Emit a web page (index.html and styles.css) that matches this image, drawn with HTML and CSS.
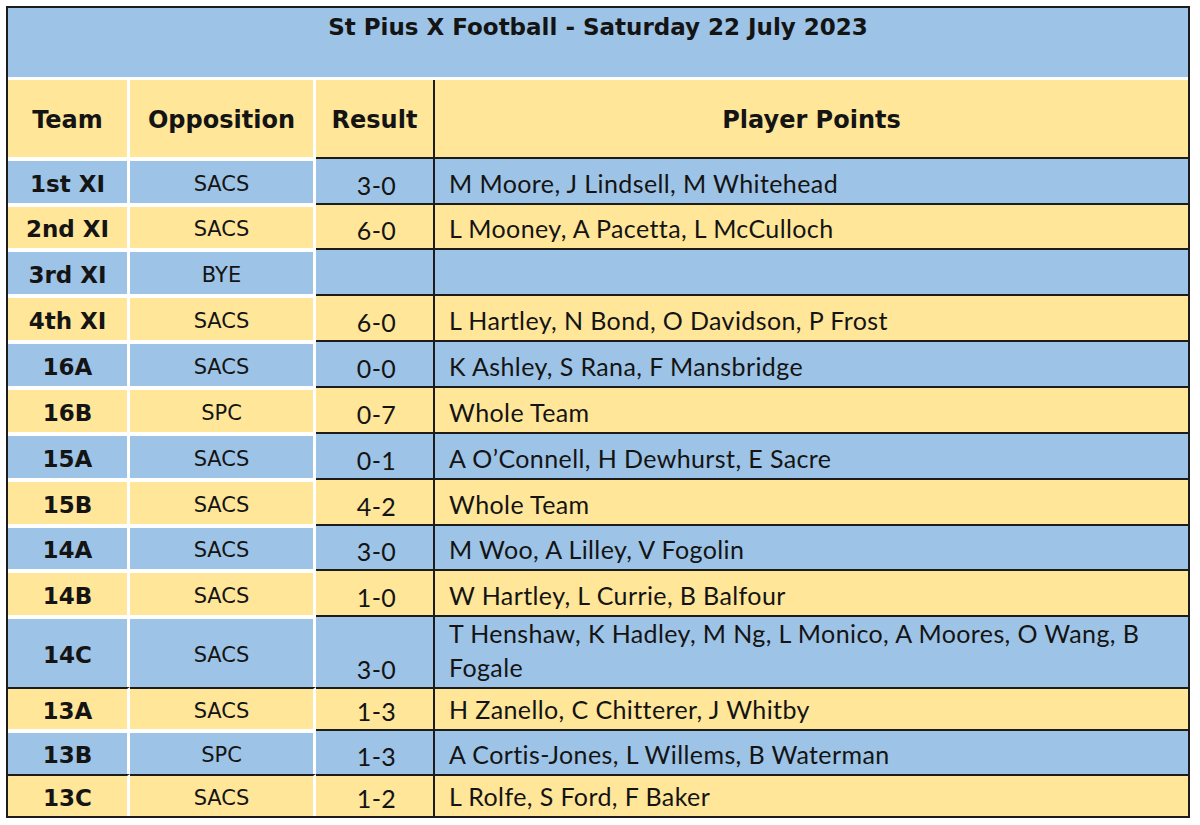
FILE: index.html
```html
<!DOCTYPE html>
<html lang="en">
<head>
<meta charset="utf-8">
<title>St Pius X Football - Saturday 22 July 2023</title>
<link rel="stylesheet" href="styles.css">
</head>
<body>
<div class="sheet">
  <div class="title">St Pius X Football - Saturday 22 July 2023</div>
  <div class="grid">
    <div class="row head yellow">
      <div class="c team">Team</div>
      <div class="c opp">Opposition</div>
      <div class="c res">Result</div>
      <div class="c pts">Player Points</div>
    </div>
    <div class="row blue">
      <div class="c team">1st XI</div><div class="c opp">SACS</div><div class="c res">3-0</div><div class="c pts">M Moore, J Lindsell, M Whitehead</div>
    </div>
    <div class="row yellow">
      <div class="c team">2nd XI</div><div class="c opp">SACS</div><div class="c res">6-0</div><div class="c pts">L Mooney, A Pacetta, L McCulloch</div>
    </div>
    <div class="row blue">
      <div class="c team">3rd XI</div><div class="c opp">BYE</div><div class="c res"></div><div class="c pts"></div>
    </div>
    <div class="row yellow">
      <div class="c team">4th XI</div><div class="c opp">SACS</div><div class="c res">6-0</div><div class="c pts">L Hartley, N Bond, O Davidson, P Frost</div>
    </div>
    <div class="row blue">
      <div class="c team">16A</div><div class="c opp">SACS</div><div class="c res">0-0</div><div class="c pts">K Ashley, S Rana, F Mansbridge</div>
    </div>
    <div class="row yellow">
      <div class="c team">16B</div><div class="c opp">SPC</div><div class="c res">0-7</div><div class="c pts">Whole Team</div>
    </div>
    <div class="row blue">
      <div class="c team">15A</div><div class="c opp">SACS</div><div class="c res">0-1</div><div class="c pts">A O’Connell, H Dewhurst, E Sacre</div>
    </div>
    <div class="row yellow">
      <div class="c team">15B</div><div class="c opp">SACS</div><div class="c res">4-2</div><div class="c pts">Whole Team</div>
    </div>
    <div class="row blue">
      <div class="c team">14A</div><div class="c opp">SACS</div><div class="c res">3-0</div><div class="c pts">M Woo, A Lilley, V Fogolin</div>
    </div>
    <div class="row yellow">
      <div class="c team">14B</div><div class="c opp">SACS</div><div class="c res">1-0</div><div class="c pts">W Hartley, L Currie, B Balfour</div>
    </div>
    <div class="row blue">
      <div class="c team">14C</div><div class="c opp">SACS</div><div class="c res">3-0</div><div class="c pts">T Henshaw, K Hadley, M Ng, L Monico, A Moores, O Wang, B Fogale</div>
    </div>
    <div class="row yellow dark-top">
      <div class="c team">13A</div><div class="c opp">SACS</div><div class="c res">1-3</div><div class="c pts">H Zanello, C Chitterer, J Whitby</div>
    </div>
    <div class="row blue">
      <div class="c team">13B</div><div class="c opp">SPC</div><div class="c res">1-3</div><div class="c pts">A Cortis-Jones, L Willems, B Waterman</div>
    </div>
    <div class="row yellow dark-top">
      <div class="c team">13C</div><div class="c opp">SACS</div><div class="c res">1-2</div><div class="c pts">L Rolfe, S Ford, F Baker</div>
    </div>
  </div>
</div>
</body>
</html>
```

FILE: styles.css
```css
* { box-sizing: border-box; }

html, body {
  margin: 0;
  padding: 0;
  background: #ffffff;
}

body {
  padding: 6px 0 0 6px;
  color: #141414;
}

.sheet {
  width: 1184px;
  height: 812px;
  border: 2px solid #1c1c1c;
  background: #ffffff;
  display: flex;
  flex-direction: column;
}

.title {
  height: 72px;
  background: #9dc3e6;
  border-bottom: 3px solid #ffffff;
  padding-top: 6px;
  text-align: center;
  font-family: "DejaVu Sans", sans-serif;
  font-weight: bold;
  font-size: 23px;
  line-height: 27px;
}

.grid {
  display: grid;
  grid-template-columns: 122px 186px 119px 1fr;
  grid-template-rows: 77px 46px 45px 46px 46px 46px 46px 46px 46px 45px 46px 72px 42px 45px 42px;
}

.row { display: contents; }

.row.blue > .c { background: #9dc3e6; }
.row.yellow > .c { background: #ffe699; }

.c {
  display: flex;
  min-width: 0;
}

.team, .opp {
  justify-content: center;
  align-items: center;
  border-right: 3px solid #ffffff;
  border-top: 4px solid #ffffff;
  font-family: "DejaVu Sans", sans-serif;
}

.team {
  font-weight: bold;
  font-size: 23px;
  padding-top: 3px;
}

.opp {
  font-size: 21px;
  padding-top: 3px;
}

.res, .pts {
  border-top: 2px solid #1c1c1c;
  font-family: Lato, sans-serif;
  font-size: 25px;
  letter-spacing: 0.4px;
  line-height: 34px;
  align-items: flex-end;
}

.res {
  justify-content: center;
  border-right: 2px solid #1c1c1c;
  padding: 0 0 1px 4px;
}

.pts {
  padding: 0 40px 3px 14px;
}

.row.dark-top > .team,
.row.dark-top > .opp {
  border-top: 2px solid #1c1c1c;
}

.head > .c {
  border-top: 0;
  align-items: center;
  justify-content: center;
  font-family: "DejaVu Sans", sans-serif;
  font-weight: bold;
  font-size: 24px;
  letter-spacing: 0;
  line-height: 30px;
  padding: 2px 0 0 0;
}
```
